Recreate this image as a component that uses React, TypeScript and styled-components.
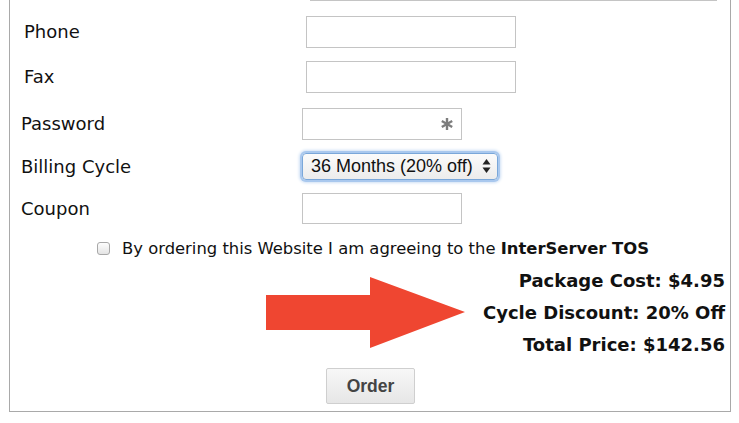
import styled, { createGlobalStyle } from 'styled-components';

const GlobalStyle = createGlobalStyle`
  body {
    margin: 0;
    background: #ffffff;
    font-family: "DejaVu Sans", Verdana, sans-serif;
    color: #111;
  }
`

const Panel = styled.div`
  box-sizing: border-box;
  width: 722px;
  margin: -40px 0 0 9px;
  border: 1px solid #a9a9a9;
  background: #fff;
`

const Row = styled.div<{ $h: number; $indent: number }>`
  display: flex;
  align-items: center;
  height: ${p => p.$h}px;
  padding-left: ${p => p.$indent}px;
`

const Label = styled.div<{ $w: number }>`
  width: ${p => p.$w}px;
  flex: none;
  font-size: 18px;
  color: #111;
`

const TextBox = styled.input<{ $w: number; $h?: number }>`
  box-sizing: border-box;
  width: ${p => p.$w}px;
  height: ${p => p.$h ?? 32}px;
  border: 1px solid #c4c4c4;
  background: #fff;
  padding: 0 6px;
  outline: none;
`

const PassBox = styled.div`
  box-sizing: border-box;
  width: 160px;
  height: 32px;
  border: 1px solid #c4c4c4;
  display: flex;
  align-items: center;
  justify-content: flex-end;
  padding-right: 8px;
`

const Select = styled.div`
  box-sizing: border-box;
  width: 196px;
  height: 27px;
  border: 1px solid #7aa7d9;
  border-radius: 4px;
  box-shadow: 0 0 0 2px #a9c8ee, 0 0 3px 3px #cfe0f5;
  background: linear-gradient(#fbfbfb, #ececec);
  display: flex;
  align-items: center;
  justify-content: space-between;
  padding: 0 6px 0 8px;
  font-family: "Liberation Sans", Arial, sans-serif;
  font-size: 18px;
  color: #111;
`

const CheckRow = styled.div`
  display: flex;
  align-items: center;
  height: 33px;
  padding-left: 87px;
  gap: 12px;
  font-size: 16.4px;
  color: #111;
`

const CheckBox = styled.span`
  box-sizing: border-box;
  width: 13px;
  height: 13px;
  border: 1px solid #a8a8a8;
  border-radius: 3px;
  background: linear-gradient(#fdfdfd, #e4e4e4);
  flex: none;
`

const Summary = styled.div`
  display: flex;
  align-items: center;
  height: 96px;
  padding-left: 256px;
`

const Totals = styled.div`
  flex: 1;
  text-align: right;
  padding-right: 5px;
  font-size: 18px;
  font-weight: bold;
  line-height: 32px;
  color: #111;
`

const ButtonRow = styled.div`
  height: 50px;
  display: flex;
  align-items: center;
  padding-left: 316px;
`

const OrderButton = styled.button`
  box-sizing: border-box;
  width: 89px;
  height: 36px;
  border: 1px solid #cfcfcf;
  border-radius: 2px;
  background: linear-gradient(#f7f7f7, #e6e6e6);
  font-family: "Liberation Sans", Arial, sans-serif;
  font-weight: bold;
  font-size: 17.5px;
  color: #444;
`

function Asterisk() {
  return (
    <svg width="12" height="12" viewBox="0 0 12 12">
      <g stroke="#7d7d7d" strokeWidth="2.4" strokeLinecap="butt">
        <line x1="6" y1="0" x2="6" y2="12" />
        <line x1="0.8" y1="3" x2="11.2" y2="9" />
        <line x1="0.8" y1="9" x2="11.2" y2="3" />
      </g>
    </svg>
  )
}

function Stepper() {
  return (
    <svg width="9" height="14" viewBox="0 0 9 14">
      <path d="M4.5 0 L8.5 5.5 L0.5 5.5 Z" fill="#222" />
      <path d="M4.5 14 L8.5 8.5 L0.5 8.5 Z" fill="#222" />
    </svg>
  )
}

function Arrow() {
  return (
    <svg width="200" height="72" viewBox="0 0 200 72" style={{ flex: 'none' }}>
      <path d="M0 18 L104 18 L104 0 L199 35 L104 71 L104 53 L0 53 Z" fill="#ef4631" />
    </svg>
  )
}

function App() {
  return (
    <>
      <GlobalStyle />
      <Panel>
        <Row $h={48} $indent={18}>
          <Label $w={282}></Label>
          <TextBox $w={407} />
        </Row>
        <Row $h={45} $indent={14}>
          <Label $w={282}>Phone</Label>
          <TextBox $w={210} />
        </Row>
        <Row $h={45} $indent={14}>
          <Label $w={282}>Fax</Label>
          <TextBox $w={210} />
        </Row>
        <Row $h={49} $indent={11}>
          <Label $w={281}>Password</Label>
          <PassBox><Asterisk /></PassBox>
        </Row>
        <Row $h={36} $indent={11}>
          <Label $w={281}>Billing Cycle</Label>
          <Select>
            <span>36 Months (20% off)</span>
            <Stepper />
          </Select>
        </Row>
        <Row $h={48} $indent={11}>
          <Label $w={281}>Coupon</Label>
          <TextBox $w={160} $h={31} />
        </Row>
        <CheckRow>
          <CheckBox />
          <span>By ordering this Website I am agreeing to the <b>InterServer TOS</b></span>
        </CheckRow>
        <Summary>
          <Arrow />
          <Totals>
            <div>Package Cost: $4.95</div>
            <div>Cycle Discount: 20% Off</div>
            <div>Total Price: $142.56</div>
          </Totals>
        </Summary>
        <ButtonRow>
          <OrderButton>Order</OrderButton>
        </ButtonRow>
      </Panel>
    </>
  )
}

export default App
